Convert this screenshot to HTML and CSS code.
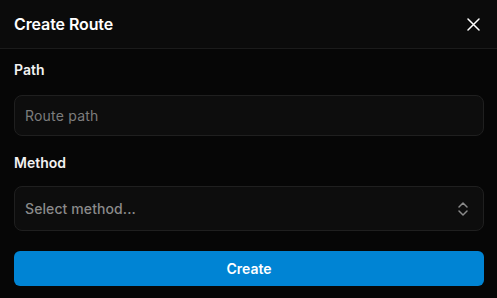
FILE: index.html
```html
<!DOCTYPE html>
<html lang="en">
<head>
    <meta charset="UTF-8">
    <title>Create Route</title>
    <link rel="stylesheet" href="styles.css">
</head>
<body>
<div class="dialog">
    <div class="dialog-head">
        <h2 class="title">Create Route</h2>
        <button class="close" type="button" aria-label="Close">
            <svg width="13" height="13" viewBox="0 0 13 13" fill="none" stroke="#fff" stroke-width="1.5" stroke-linecap="round"><path d="M1 1L12 12M12 1L1 12"/></svg>
        </button>
    </div>
    <form class="dialog-body">
        <label class="field-label" for="path">Path</label>
        <input class="input" id="path" type="text" placeholder="Route path">
        <label class="field-label method-label">Method</label>
        <div class="select">
            <span class="select-text">Select method...</span>
            <svg width="12" height="16" viewBox="0 0 12 16" fill="none" stroke="#8a8a8a" stroke-width="1.5" stroke-linecap="round" stroke-linejoin="round"><path d="M2 6L6 2L10 6M2 10L6 14L10 10"/></svg>
        </div>
        <button class="submit" type="button">Create</button>
    </form>
</div>
</body>
</html>
```
FILE: styles.css
```css
html,body{margin:0;padding:0;}
body{background:#060606;font-family:Inter,"Noto Sans",sans-serif;color:#fff;}
.dialog{width:497px;height:298px;display:flex;flex-direction:column;}
.dialog-head{height:48px;background:#0b0b0b;border-bottom:1px solid #1b1b1b;display:flex;align-items:center;justify-content:space-between;padding:0 17px 0 14px;}
.title{margin:0;font-size:16px;font-weight:600;letter-spacing:-0.1px;}
.close{background:none;border:0;padding:0;width:13px;height:13px;display:flex;cursor:pointer;}
.dialog-body{display:flex;flex-direction:column;padding:12px 13px 0 14px;}
.field-label{font-size:14px;font-weight:600;line-height:17px;color:#f2f2f2;}
.method-label{margin-top:18px;}
.input{margin-top:17px;height:41px;box-sizing:border-box;background:#0d0d0d;border:1px solid #1f1f1f;border-radius:8px;padding:0 10px;font:14px Inter,sans-serif;letter-spacing:0.2px;color:#fff;outline:none;}
.input::placeholder{color:#7d7d7d;}
.select{margin-top:15px;height:45px;box-sizing:border-box;background:#0d0d0d;border:1px solid #1f1f1f;border-radius:8px;padding:0 14px 0 10px;display:flex;align-items:center;justify-content:space-between;}
.select-text{font-size:14px;font-weight:500;color:#8a8a8a;letter-spacing:0.1px;}
.submit{margin-top:20px;height:35px;background:#0084d4;border:0;border-radius:6px;color:#fff;font:600 14px Inter,sans-serif;cursor:pointer;}
```
